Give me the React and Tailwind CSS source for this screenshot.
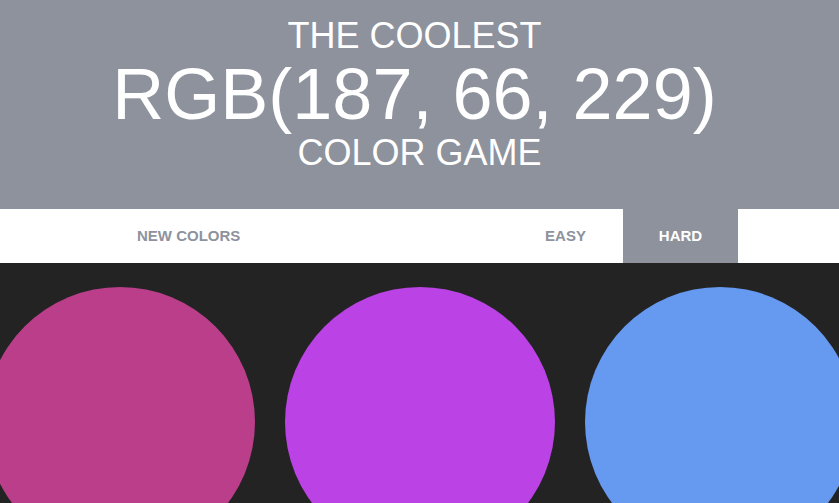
export default function App() {
  const colors = ["#bb3e8a", "#bb42e5", "#6699f0"];

  return (
    <div className="min-h-screen overflow-hidden bg-[#232323] font-['Liberation_Sans',Arial,sans-serif]">
      <header className="bg-[#8d929d] pt-[14px] pb-[34px] text-center text-white">
        <div className="pr-[10px] text-[36px] leading-[44px]">THE COOLEST</div>
        <div className="pr-[10px] text-[72px] leading-[73px]">RGB(187, 66, 229)</div>
        <div className="text-[36px] leading-[44px]">COLOR GAME</div>
      </header>

      <nav className="flex h-[54px] justify-center bg-white">
        <div className="flex w-[637px] items-stretch justify-between text-[15px] font-bold text-[#8d929d]">
          <button className="px-[36px]">NEW COLORS</button>
          <div className="flex">
            <button className="w-[115px]">EASY</button>
            <button className="w-[115px] bg-[#8d929d] text-white">HARD</button>
          </div>
        </div>
      </nav>

      <main className="flex justify-center gap-[30px] pt-[24px]">
        {colors.map((c) => (
          <div
            key={c}
            className="h-[270px] w-[270px] shrink-0 rounded-full"
            style={{ backgroundColor: c }}
          />
        ))}
      </main>
    </div>
  );
}
